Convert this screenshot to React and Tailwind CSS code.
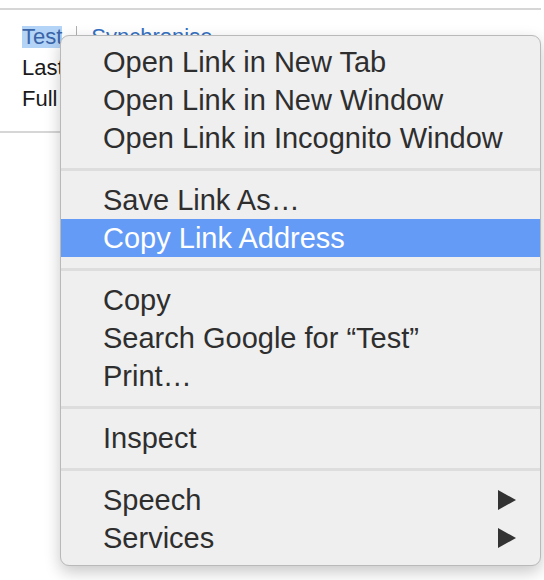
import React from 'react';

const sections = [
  ['Open Link in New Tab', 'Open Link in New Window', 'Open Link in Incognito Window'],
  ['Save Link As…', 'Copy Link Address'],
  ['Copy', 'Search Google for “Test”', 'Print…'],
  ['Inspect'],
  ['Speech', 'Services'],
];

const submenus = ['Speech', 'Services'];

const Arrow = () => (
  <svg width="18" height="20" viewBox="0 0 18 20" className="shrink-0">
    <path d="M0 0 L18 10 L0 20 Z" fill="#333333" />
  </svg>
);

const MenuItem = ({ label }) => {
  const active = label === 'Copy Link Address';
  return (
    <div
      className={`flex items-center justify-between h-[38px] pl-[42px] pr-[24px] text-[29px] leading-[38px] ${
        active ? 'bg-[#649bf7] text-white' : 'text-[#2e2e2e]'
      }`}
    >
      <span>{label}</span>
      {submenus.includes(label) && <Arrow />}
    </div>
  );
};

export default function App() {
  return (
    <div className="relative w-[544px] h-[580px] bg-white overflow-hidden" style={{ fontFamily: '"Liberation Sans", Arial, sans-serif' }}>
      {/* page content behind the menu */}
      <div className="pt-[8px]">
        <div className="h-[2px] w-[541px] bg-[#d6d6d6]" />
        <div className="pl-[22px] pt-[11px] text-[22px] leading-[31px] text-[#1a1a1a]">
          <div className="flex items-center">
            <span className="bg-[#b4d4f7] text-[#3a64a8] leading-[22px]">Test</span>
            <span className="mx-[14px] h-[22px] w-[1px] bg-[#b0b0b0]" />
            <span className="text-[#3470c2]">Synchronise</span>
          </div>
          <div>Last</div>
          <div>Full</div>
        </div>
        <div className="mt-[17px] h-[2px] w-[541px] bg-[#d6d6d6]" />
      </div>

      {/* context menu */}
      <div className="absolute left-[60px] top-[35px] w-[481px] h-[531px] py-[7px] bg-[#efefef] border border-[#b9b9b9] rounded-[9px] shadow-[0_6px_16px_rgba(0,0,0,0.22)]">
        {sections.map((items, i) => (
          <div key={i}>
            {i > 0 && (
              <div className="h-[24px] flex items-center">
                <div className="h-[3px] w-full bg-[#dddddd]" />
              </div>
            )}
            {items.map((label) => (
              <MenuItem key={label} label={label} />
            ))}
          </div>
        ))}
      </div>
    </div>
  );
}
